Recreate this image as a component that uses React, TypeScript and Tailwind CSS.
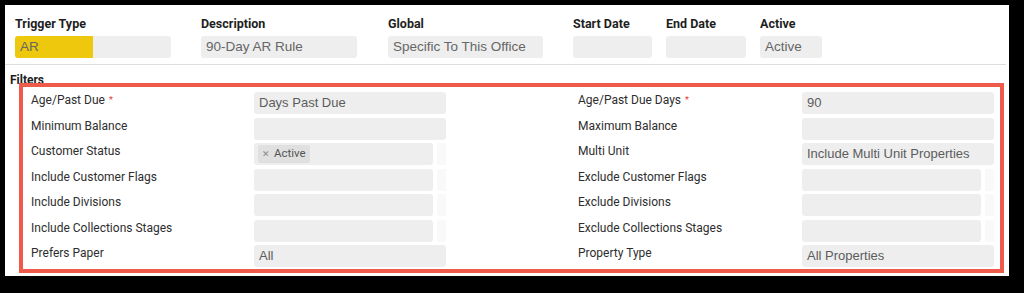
import React from "react";

const labelFont = { fontFamily: "Roboto, 'Noto Sans', sans-serif" };

function TopField({ label, value, w, ml, yellow }: { label: string; value?: string; w: string; ml: string; yellow?: boolean }) {
  return (
    <div className={`${w} ${ml} shrink-0`}>
      <div className="h-[16px] leading-[16px] text-[12.5px] font-bold text-[#1e1e1e] font-['Roboto',sans-serif] whitespace-nowrap">{label}</div>
      <div className="mt-[4px] h-[22px] rounded-[3px] bg-[#eeeeee] flex items-center relative overflow-hidden">
        {yellow && <div className="absolute left-0 top-0 h-full w-[78px] bg-[#edc80c]" />}
        <span className="relative pl-[5px] text-[13.5px] text-[#666666] font-['Liberation_Sans',Arial,sans-serif]">{value}</span>
      </div>
    </div>
  );
}

type Row = { label: string; req?: boolean; value?: string; multi?: boolean; chip?: string };

function Input({ r }: { r: Row }) {
  if (r.multi) {
    return (
      <div className="w-[192px] h-[22px] flex shrink-0">
        <div className="w-[179px] h-full rounded-[3px] bg-[#eeeeee] flex items-center">
          {r.chip && (
            <div className="ml-[4px] h-[18px] px-[4px] rounded-[2px] bg-[#e0e0e0] flex items-center gap-[4px] text-[11.5px] text-[#555] font-['Roboto',sans-serif]">
              <span className="text-[9px] text-[#888] leading-none">✕</span>
              <span>{r.chip}</span>
            </div>
          )}
        </div>
        <div className="ml-[4px] w-[9px] h-full bg-[#f9f9f9]" />
      </div>
    );
  }
  return (
    <div className="w-[192px] h-[22px] rounded-[3px] bg-[#eeeeee] flex items-center shrink-0">
      {r.value && <span className="pl-[5px] text-[13px] text-[#5c5c5c] font-['Liberation_Sans',Arial,sans-serif] whitespace-nowrap">{r.value}</span>}
    </div>
  );
}

function Label({ r, w }: { r: Row; w: string }) {
  return (
    <div className={`${w} shrink-0 h-[16px] leading-[16px] text-[12px] text-[#2e2e2e] whitespace-nowrap`} style={labelFont}>
      {r.label}
      {r.req && <span className="ml-[4px] text-[9px] text-[#e23b3b] align-top">*</span>}
    </div>
  );
}

const rows: [Row, Row][] = [
  [{ label: "Age/Past Due", req: true, value: "Days Past Due" }, { label: "Age/Past Due Days", req: true, value: "90" }],
  [{ label: "Minimum Balance" }, { label: "Maximum Balance" }],
  [{ label: "Customer Status", multi: true, chip: "Active" }, { label: "Multi Unit", value: "Include Multi Unit Properties" }],
  [{ label: "Include Customer Flags", multi: true }, { label: "Exclude Customer Flags", multi: true }],
  [{ label: "Include Divisions", multi: true }, { label: "Exclude Divisions", multi: true }],
  [{ label: "Include Collections Stages", multi: true }, { label: "Exclude Collections Stages", multi: true }],
  [{ label: "Prefers Paper", value: "All" }, { label: "Property Type", value: "All Properties" }],
];

export default function App() {
  return (
    <div className="w-[1024px] h-[293px] bg-black pt-[5px] pl-[5px] overflow-hidden">
      <div className="w-[1004px] h-[271px] bg-white">
        <div className="flex pt-[11px] pl-[10px]">
          <TopField label="Trigger Type" value="AR" w="w-[156px]" ml="ml-0" yellow />
          <TopField label="Description" value="90-Day AR Rule" w="w-[156px]" ml="ml-[30px]" />
          <TopField label="Global" value="Specific To This Office" w="w-[155px]" ml="ml-[31px]" />
          <TopField label="Start Date" w="w-[79px]" ml="ml-[30px]" />
          <TopField label="End Date" w="w-[80px]" ml="ml-[14px]" />
          <TopField label="Active" value="Active" w="w-[62px]" ml="ml-[14px]" />
        </div>
        <div className="mt-[6px] mr-[3px] border-t border-[#dedede]" />
        <div className="mt-[8px] h-[10px] pl-[5px] leading-[14px] text-[12px] font-bold text-[#1e1e1e]" style={labelFont}>Filters</div>
        <div className="relative ml-[14px] w-[985px] h-[190px] border-4 border-[#ee5b4b] bg-white pt-[5px] pl-[8px]">
          <div className="flex flex-col">
            {rows.map(([a, b], i) => (
              <div key={i} className="flex h-[25.5px]">
                <Label r={a} w="w-[223px]" />
                <Input r={a} />
                <div className="w-[132px] shrink-0" />
                <Label r={b} w="w-[224px]" />
                <Input r={b} />
              </div>
            ))}
          </div>
        </div>
      </div>
    </div>
  );
}
